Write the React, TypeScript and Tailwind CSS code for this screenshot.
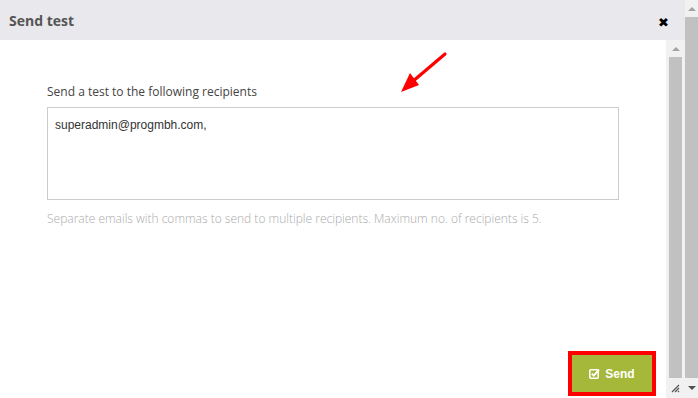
import React, { useState } from "react";

function ScrollBar({ grip }: { grip?: boolean }) {
  return (
    <div className="flex h-full flex-col bg-[#f1f1f1]">
      <div className="flex h-[17px] items-center justify-center">
        <span className="h-0 w-0 border-x-[4px] border-b-[4px] border-x-transparent border-b-[#a3a3a3]" />
      </div>
      <div className="mx-auto w-[13px] flex-1 bg-[#c1c1c1]" />
      <div className="flex h-[20px] items-center justify-center">
        {grip ? (
          <svg width="9" height="9" viewBox="0 0 9 9">
            <path d="M8 1L1 8M8 4L4 8M8 7L7 8" stroke="#555" strokeWidth="1.2" />
          </svg>
        ) : (
          <span className="h-0 w-0 border-x-[4px] border-t-[4px] border-x-transparent border-t-[#505050]" />
        )}
      </div>
    </div>
  );
}

export default function App() {
  const [emails, setEmails] = useState("superadmin@progmbh.com,");

  return (
    <div className="flex h-[398px] w-[698px] overflow-hidden bg-white font-['Open_Sans',sans-serif]">
      <div className="flex min-w-0 flex-1 flex-col">
        <div className="flex h-[40px] shrink-0 items-center justify-between bg-[#e9e8ed] pl-[9px] pr-[16px]">
          <h3 className="text-[14px] font-bold text-[#555]">Send test</h3>
          <span className="mt-[5px] text-[13px] font-bold leading-none text-black font-['DejaVu_Sans',sans-serif]">
            ✖
          </span>
        </div>
        <div className="flex min-h-0 flex-1">
          <div className="relative flex flex-1 flex-col pl-[47px] pr-[10px] pt-[43px]">
            <svg
              className="absolute left-[396px] top-[10px]"
              width="56"
              height="48"
              viewBox="0 0 56 48"
            >
              <line x1="49" y1="4" x2="16" y2="32" stroke="#ff0000" strokeWidth="3.2" strokeLinecap="round" />
              <polygon points="5,42 14,23 23,35" fill="#ff0000" />
            </svg>
            <label className="text-[12px] leading-[17px] text-[#444]">
              Send a test to the following recipients
            </label>
            <textarea
              value={emails}
              onChange={(e) => setEmails(e.target.value)}
              className="mt-[7px] h-[93px] w-[572px] resize-none border border-[#ccc] px-[7px] py-[9px] text-[12px] leading-[17px] text-[#333] font-['Liberation_Sans',sans-serif] outline-none"
            />
            <p className="mt-[10px] text-[12px] font-light leading-[17px] text-[#aaa]">
              Separate emails with commas to send to multiple recipients. Maximum no. of recipients is 5.
            </p>
            <div className="mt-auto mb-[2px] flex justify-end">
              <button className="flex h-[45px] w-[88px] items-center justify-center gap-[5px] border-[4px] border-[#ff0000] bg-[#a6b83a] text-[12px] font-bold text-white font-['Liberation_Sans',sans-serif]">
                <svg width="11" height="11" viewBox="0 0 11 11">
                  <rect x="0.8" y="1.8" width="8.4" height="8.4" rx="1" fill="none" stroke="white" strokeWidth="1.6" />
                  <path d="M2.8 5.6L4.8 7.6L10 1.6" fill="none" stroke="white" strokeWidth="1.8" />
                </svg>
                Send
              </button>
            </div>
          </div>
          <div className="w-[19px] shrink-0">
            <ScrollBar grip />
          </div>
        </div>
      </div>
      <div className="w-[13px] shrink-0">
        <ScrollBar />
      </div>
    </div>
  );
}
